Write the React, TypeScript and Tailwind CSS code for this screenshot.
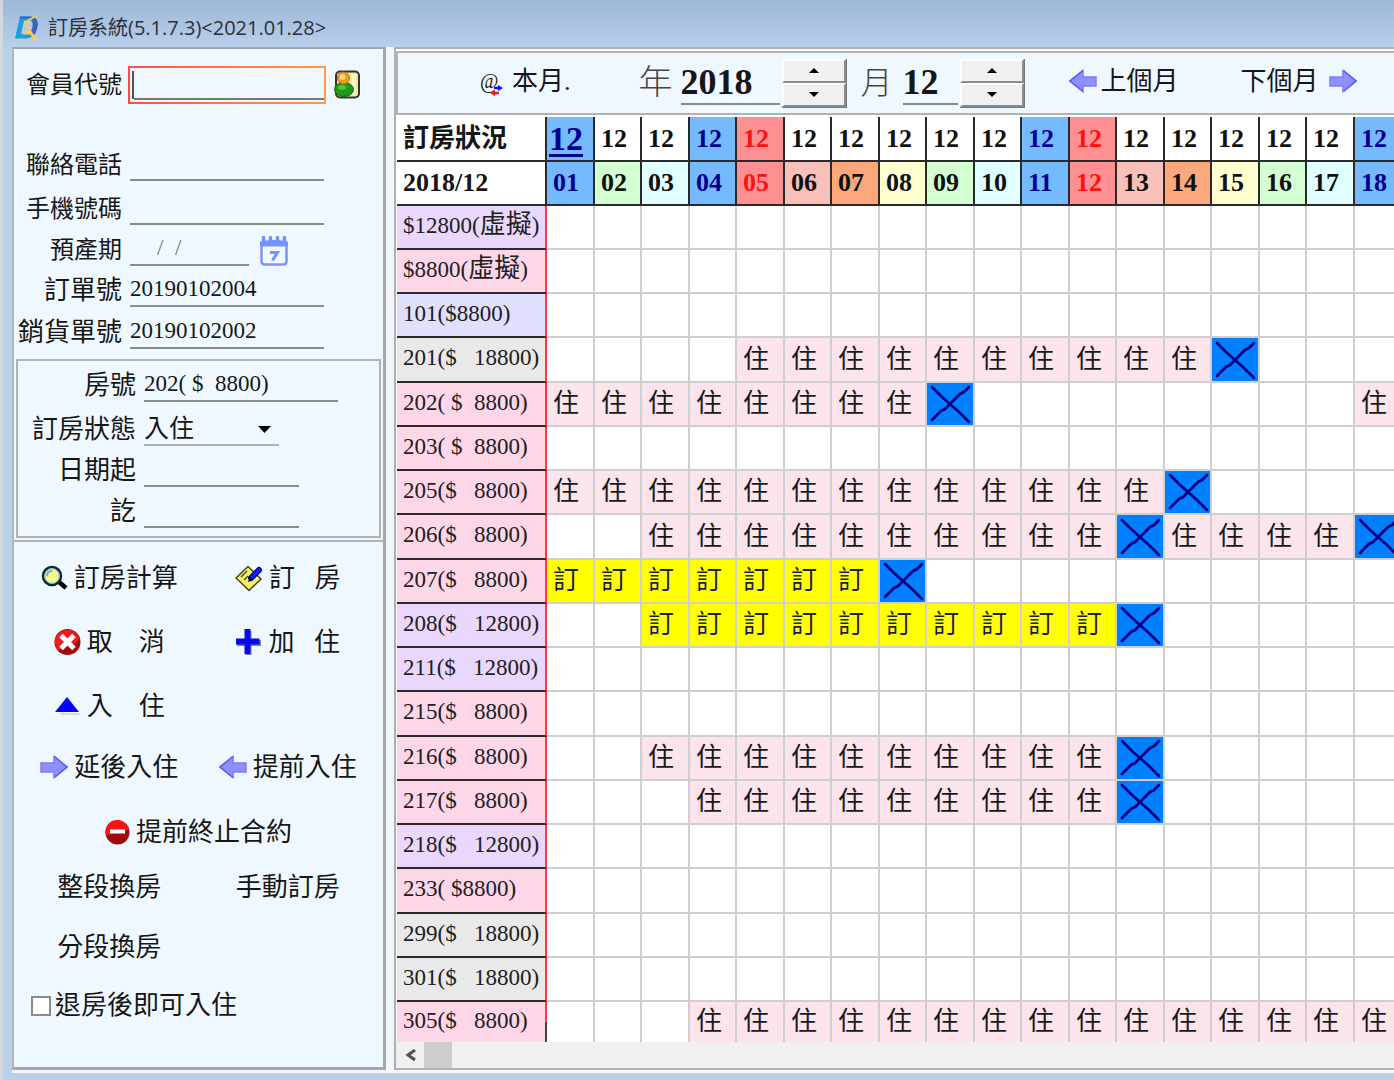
import type { ReactNode } from "react";

type Mark = "" | "stay" | "book" | "out";
type Room = { label: ReactNode; tone: string; marks: Mark[] };

const PINK = "bg-[#fdd6e8]";
const LILAC = "bg-[#e9d7fd]";
const INDIGO = "bg-[#dfe0ff]";
const GREY = "bg-[#e9e9e9]";

const DAYS = Array.from({ length: 18 }, (_, i) => i + 1);

const DAY_TONES = [
  "bg-[#75b9ff] text-[#000090]",
  "bg-[#d3ffd3] text-[#101010]",
  "bg-[#e0ffff] text-[#101010]",
  "bg-[#75b9ff] text-[#000090]",
  "bg-[#ff9092] text-[#ff1010]",
  "bg-[#f8c0b8] text-[#101010]",
  "bg-[#fda77c] text-[#101010]",
  "bg-[#ffffd0] text-[#101010]",
  "bg-[#d3ffd3] text-[#101010]",
  "bg-[#e0ffff] text-[#101010]",
];

function dayTone(day: number) {
  return day <= 3 ? DAY_TONES[day - 1] : DAY_TONES[3 + ((day - 4) % 7)];
}

function monthTone(day: number) {
  const t = dayTone(day);
  return t === DAY_TONES[0] || t === DAY_TONES[4] ? t : "bg-white text-[#101010]";
}

function marks(...runs: [number, number, Mark][]): Mark[] {
  return DAYS.map((d) => {
    const run = runs.find(([from, to]) => d >= from && d <= to);
    return run ? run[2] : "";
  });
}

function virtual(price: string) {
  return (
    <>
      ${price}(<span className="text-[26px]">虛擬</span>)
    </>
  );
}

const ROOMS: Room[] = [
  { label: virtual("12800"), tone: LILAC, marks: marks() },
  { label: virtual("8800"), tone: PINK, marks: marks() },
  { label: "101($8800)", tone: INDIGO, marks: marks() },
  { label: "201($   18800)", tone: GREY, marks: marks([5, 14, "stay"], [15, 15, "out"]) },
  { label: "202( $  8800)", tone: PINK, marks: marks([1, 8, "stay"], [9, 9, "out"], [18, 18, "stay"]) },
  { label: "203( $  8800)", tone: PINK, marks: marks() },
  { label: "205($   8800)", tone: PINK, marks: marks([1, 13, "stay"], [14, 14, "out"]) },
  {
    label: "206($   8800)",
    tone: PINK,
    marks: marks([3, 12, "stay"], [13, 13, "out"], [14, 17, "stay"], [18, 18, "out"]),
  },
  { label: "207($   8800)", tone: PINK, marks: marks([1, 7, "book"], [8, 8, "out"]) },
  { label: "208($   12800)", tone: LILAC, marks: marks([3, 12, "book"], [13, 13, "out"]) },
  { label: "211($   12800)", tone: LILAC, marks: marks() },
  { label: "215($   8800)", tone: PINK, marks: marks() },
  { label: "216($   8800)", tone: PINK, marks: marks([3, 12, "stay"], [13, 13, "out"]) },
  { label: "217($   8800)", tone: PINK, marks: marks([4, 12, "stay"], [13, 13, "out"]) },
  { label: "218($   12800)", tone: LILAC, marks: marks() },
  { label: "233( $8800)", tone: PINK, marks: marks() },
  { label: "299($   18800)", tone: GREY, marks: marks() },
  { label: "301($   18800)", tone: GREY, marks: marks() },
  { label: "305($   8800)", tone: PINK, marks: marks([4, 18, "stay"]) },
];

const MARK_TONES: Record<Mark, string> = {
  "": "bg-white",
  stay: "bg-[#fce4ec] text-[#181818]",
  book: "bg-[#ffff00] text-[#1c1c50]",
  out: "bg-[#0080ff]",
};

/* ---------- icons ---------- */

function LogoIcon() {
  return (
    <svg width="25" height="26" viewBox="0 0 25 26" aria-hidden="true">
      <path d="M5 1.500h10c6 0 8.500 4 7.500 10-1.500 8-5.500 12-12.500 12H0Z" fill="#1c9fd8" />
      <path d="M5 1.500h10c6 0 8.500 4 7.500 10-1 5-3 9-6 11l-1-8 2-11H4.500Z" fill="#3a66b4" />
      <path d="M9 5.500h5c3 0 4 2 3.500 6-1 5-3 7.500-7.500 7.500H6Z" fill="#b3c9e6" />
      <path d="M24.500.5c-5 0-15 4-15 9 0 3 3 4 5 5l-7 5 8 0c1 2 2 4 4 6l3-1c-3-3-5-7-7-10-2-3-4-4-3-6 1-3 6-5 12-8Z" fill="#f8cf4a" />
    </svg>
  );
}

function MemberIcon() {
  return (
    <svg width="27" height="29" viewBox="0 0 27 29" aria-hidden="true">
      <rect x="2" y="1.500" width="23" height="26" rx="4" fill="#e9eda0" stroke="#333" strokeWidth="2" />
      <path d="M20 4v21" stroke="#fffbc0" strokeWidth="4" />
      <ellipse cx="10" cy="19.500" rx="9.500" ry="7" fill="#219a1c" stroke="#0e6b12" />
      <ellipse cx="8" cy="17.500" rx="4" ry="2.500" fill="#4cc63c" />
      <circle cx="9.500" cy="8" r="6" fill="#f39a22" stroke="#c86d12" />
      <circle cx="8.500" cy="7" r="3" fill="#ffd778" />
    </svg>
  );
}

function CalendarIcon() {
  return (
    <svg width="30" height="31" viewBox="0 0 30 31" aria-hidden="true">
      <rect x="2.500" y="7" width="25" height="22.500" rx="3" fill="#f4f8ff" stroke="#7b93ff" strokeWidth="2.500" />
      <path d="M1 6.500q14-3 28 0v5H1Z" fill="#7093ff" />
      <path d="M4.500 2.500v5M11.500 2.500v5M18.500 2.500v5M25.500 2.500v5" stroke="#7093ff" strokeWidth="3.500" strokeLinecap="round" />
      <path d="M11 17.500h7.500l-5 8" fill="none" stroke="#7093ff" strokeWidth="3" />
    </svg>
  );
}

function SearchIcon() {
  return (
    <svg width="27" height="26" viewBox="0 0 27 26" aria-hidden="true">
      <path d="M18 17l7 6" stroke="#000" strokeWidth="4.500" />
      <circle cx="11" cy="11" r="9" fill="#f7f78c" stroke="#10233c" strokeWidth="2.500" />
      <circle cx="11" cy="11" r="7.200" fill="none" stroke="#7cc4e8" strokeWidth="1" />
      <path d="M6 11c0-3 2-5 5-5" fill="none" stroke="#5ab8f0" strokeWidth="2" />
    </svg>
  );
}

function NoteIcon() {
  return (
    <svg width="28" height="27" viewBox="0 0 28 27" aria-hidden="true">
      <path d="M1 13L13 1.500 26 14 14 25.500Z" fill="#f3f06a" stroke="#4a4410" strokeWidth="1.500" />
      <path d="M6 12l6-6M9 15l4-4" stroke="#55521c" strokeWidth="1.500" />
      <path d="M16 13l8-8" stroke="#000070" strokeWidth="6" strokeLinecap="round" />
      <path d="M17 12l7-7" stroke="#1020ff" strokeWidth="3.500" strokeLinecap="round" />
      <path d="M13 17l2-5 3 3Z" fill="#000" />
    </svg>
  );
}

function CancelIcon() {
  return (
    <svg width="27" height="28" viewBox="0 0 27 28" aria-hidden="true">
      <circle cx="13.500" cy="14" r="13" fill="#a30c0c" />
      <path d="M0.500 14a13 13 0 0 1 25-4c-5 8-14 9-22 12Z" fill="#ee1c1c" />
      <path d="M7 7.500l13 13M20 7.500l-13 13" stroke="#fff" strokeWidth="5" />
    </svg>
  );
}

function PlusIcon() {
  return (
    <svg width="27" height="28" viewBox="0 0 27 28" aria-hidden="true">
      <path d="M10.500 3h6v9H26v6h-9.500v9h-6v-9H2v-6h8.500Z" fill="#808080" />
      <path d="M9.500 1h6v9.500h9v6h-9V26h-6v-9.500H1v-6h8.500Z" fill="#0808f4" />
    </svg>
  );
}

function UpIcon() {
  return (
    <svg width="27" height="20" viewBox="0 0 27 20" aria-hidden="true">
      <path d="M6 17h20v2H8Z" fill="#dcdcdc" />
      <path d="M13 1L25 16H1Z" fill="#0404fa" />
    </svg>
  );
}

function ArrowRightIcon() {
  return (
    <svg width="28" height="24" viewBox="0 0 28 24" aria-hidden="true">
      <path d="M1 8h13V1.500L27 12 14 22.500V17H1Z" fill="#8f8fff" stroke="#7b7bfc" strokeWidth="1.500" />
      <path d="M14.500 1.500L27 12 14.500 22.500" fill="none" stroke="#5f5ff8" strokeWidth="1.500" />
    </svg>
  );
}

function ArrowLeftIcon() {
  return (
    <svg width="28" height="24" viewBox="0 0 28 24" aria-hidden="true">
      <path d="M27 8H14V1.500L1 12l13 10.500V17h13Z" fill="#8f8fff" stroke="#7b7bfc" strokeWidth="1.500" />
      <path d="M14 1.500L1 12l13 10.500" fill="none" stroke="#5f5ff8" strokeWidth="1.500" />
    </svg>
  );
}

function StopIcon() {
  return (
    <svg width="25" height="25" viewBox="0 0 25 25" aria-hidden="true">
      <circle cx="12.500" cy="12.500" r="12" fill="#a00a0a" />
      <path d="M0.700 15A12 12 0 1 1 24 9c-6 6-14 3-23 6Z" fill="#f81414" />
      <path d="M5 11.500h15" stroke="#fff" strokeWidth="4" />
    </svg>
  );
}

function SwapArrows() {
  return (
    <svg className="absolute left-2.5 top-4" width="13" height="11" viewBox="0 0 13 11" aria-hidden="true">
      <path d="M4 3h5" stroke="#1010ff" strokeWidth="2.500" />
      <path d="M8 0l5 3-5 3Z" fill="#1010ff" />
      <path d="M4 8h5" stroke="#ff1010" strokeWidth="2.500" />
      <path d="M5 5L0 8l5 3Z" fill="#ff1010" />
    </svg>
  );
}

function CrossMark() {
  return (
    <svg className="block" width="46" height="42" viewBox="0 0 46 42" role="img" aria-label="退房">
      <path
        d="M5 4l9 9 10 9 8 7 10 10M42 4l-5 5-4 2-9 9-6 6-4 2-9 9"
        fill="none"
        stroke="#000080"
        strokeWidth="2.800"
        strokeLinecap="round"
      />
    </svg>
  );
}

/* ---------- controls ---------- */

function Field({
  id,
  label,
  labelClass,
  rowClass = "h-[41px]",
  widthClass = "w-[194px]",
  value = "",
  children,
}: {
  id: string;
  label: string;
  labelClass: string;
  rowClass?: string;
  widthClass?: string;
  value?: string;
  children?: ReactNode;
}) {
  return (
    <div className={`flex items-end gap-2 ${rowClass}`}>
      <label htmlFor={id} className={`shrink-0 whitespace-nowrap text-right leading-8 ${labelClass}`}>
        {label}
      </label>
      <input
        id={id}
        defaultValue={value}
        className={`h-8 border-b-2 border-[#8a8a8a] bg-transparent pb-0.5 text-[23px] outline-none ${widthClass}`}
      />
      {children}
    </div>
  );
}

function Action({ icon, label, className = "" }: { icon?: ReactNode; label: string; className?: string }) {
  return (
    <button type="button" className={`flex items-center justify-center gap-1.5 whitespace-pre text-[26px] ${className}`}>
      {icon}
      <span>{label}</span>
    </button>
  );
}

function Spinner({ name }: { name: string }) {
  const cls =
    "flex h-6 w-full items-center justify-center border-2 border-b-[#8c8c8c] border-l-white border-r-[#8c8c8c] border-t-white bg-[#f0f0f0]";
  return (
    <div className="w-[65px] border-b border-r border-[#777]">
      <button type="button" aria-label={`${name}+`} className={cls}>
        <svg width="10" height="5" viewBox="0 0 10 5" aria-hidden="true">
          <path d="M5 0l5 5H0Z" fill="#000" />
        </svg>
      </button>
      <button type="button" aria-label={`${name}-`} className={cls}>
        <svg width="10" height="5" viewBox="0 0 10 5" aria-hidden="true">
          <path d="M0 0h10L5 5Z" fill="#000" />
        </svg>
      </button>
    </div>
  );
}

/* ---------- panels ---------- */

function SidePanel() {
  const outer = "w-[108px]";
  const inner = "w-[118px] text-[26px]";
  return (
    <aside className="flex w-[374px] shrink-0 flex-col border-b-[3px] border-l-2 border-r-[3px] border-t-2 border-[#a6a6a6] border-l-[#b4b4b4] bg-[#f0f8ff]">
      <div className="mt-[17px] flex h-[38px] items-center">
        <label htmlFor="member" className="w-[108px] shrink-0 text-right text-[24px]">
          會員代號
        </label>
        <div className="ml-1.5 h-[38px] w-[198px] bg-linear-to-r from-[#ff4a48] to-[#ff9a48] p-0.5">
          <div className="flex h-full items-center bg-[#f0f8ff] pl-0.5">
            <span className="h-7 w-0.5 bg-[#555]" />
            <input id="member" className="h-[30px] w-full border-b-2 border-[#777] bg-transparent text-[23px] outline-none" />
          </div>
        </div>
        <button type="button" aria-label="會員" className="ml-2 pb-0.5">
          <MemberIcon />
        </button>
      </div>

      <Field id="phone" label="聯絡電話" labelClass={`${outer} text-[24px]`} rowClass="h-[77px]" />
      <Field id="mobile" label="手機號碼" labelClass={`${outer} text-[24px]`} rowClass="h-11" />
      <Field
        id="due"
        label="預產期"
        labelClass={`${outer} text-[24px]`}
        widthClass="w-[119px] whitespace-pre pl-1 text-[#777]"
        value="    /  /"
      >
        <button type="button" aria-label="日曆" className="ml-0.5">
          <CalendarIcon />
        </button>
      </Field>
      <Field id="order" label="訂單號" labelClass={`${outer} text-[26px]`} value="20190102004" />
      <Field id="sales" label="銷貨單號" labelClass={`${outer} text-[26px]`} value="20190102002" rowClass="h-[42px]" />

      <div className="mx-0.5 mt-2.5 border-2 border-[#b2b2b2] pb-2">
        <Field id="room" label="房號" labelClass={inner} value="202( $  8800)" rowClass="h-[41px]" />
        <div className="flex h-11 items-end gap-2">
          <label htmlFor="status" className={`shrink-0 text-right leading-8 ${inner}`}>
            訂房狀態
          </label>
          <div className="relative w-[135px]">
            <select
              id="status"
              className="block h-8 w-full appearance-none border-b-2 border-[#b0b0b0] bg-transparent text-[25px] leading-7 outline-none"
            >
              <option>入住</option>
            </select>
            <svg className="pointer-events-none absolute right-2 top-3" width="13" height="7" viewBox="0 0 13 7" aria-hidden="true">
              <path d="M0 0h13L6.500 7Z" fill="#000" />
            </svg>
          </div>
        </div>
        <Field id="from" label="日期起" labelClass={inner} widthClass="w-[155px]" />
        <Field id="to" label="訖" labelClass={inner} widthClass="w-[155px]" />
      </div>
      <div className="mt-0.5 h-0.5 bg-[#b2b2b2]" />

      <div className="mx-1.5 mt-1 grid grid-cols-2 grid-rows-[64px_64px_64px_58px_72px_38px_82px]">
        <Action icon={<SearchIcon />} label="訂房計算" />
        <Action icon={<NoteIcon />} label="訂   房" />
        <Action icon={<CancelIcon />} label="取　消" />
        <Action icon={<PlusIcon />} label="加   住" />
        <Action icon={<UpIcon />} label="入　住" />
        <span />
        <Action icon={<ArrowRightIcon />} label="延後入住" />
        <Action icon={<ArrowLeftIcon />} label="提前入住" />
        <Action icon={<StopIcon />} label="提前終止合約" className="col-span-2" />
        <Action label="整段換房" />
        <Action label="手動訂房" />
        <Action label="分段換房" />
      </div>
      <label className="ml-[17px] flex items-center gap-1 text-[26px] leading-9">
        <input type="checkbox" className="size-5 appearance-none border-2 border-[#8a8a8a] bg-white" />
        退房後即可入住
      </label>
    </aside>
  );
}

function Toolbar() {
  return (
    <div className="flex h-16 shrink-0 items-center whitespace-nowrap border-2 border-r-0 border-[#b2b2b2] bg-[#f0f8ff] pl-[82px] text-[26px]">
      <button type="button" className="flex items-center pb-1">
        <span className="relative mr-2.5 w-[22px] text-left text-[20px] leading-6">
          @
          <SwapArrows />
        </span>
        本月.
      </button>
      <label htmlFor="year" className="ml-[68px] text-[34px] font-light leading-10 text-[#444]">
        年
      </label>
      <input
        id="year"
        defaultValue="2018"
        className="ml-2 h-11 w-[99px] border-b-2 border-[#8a8a8a] bg-transparent text-[36px] font-bold outline-none"
      />
      <div className="ml-0.5">
        <Spinner name="年" />
      </div>
      <label htmlFor="month" className="ml-3.5 text-[32px] font-light leading-10 text-[#444]">
        月
      </label>
      <input
        id="month"
        defaultValue="12"
        className="ml-2.5 h-11 w-[55px] border-b-2 border-[#8a8a8a] bg-transparent text-[36px] font-bold outline-none"
      />
      <div className="ml-0.5">
        <Spinner name="月" />
      </div>
      <button type="button" className="ml-11 flex items-center gap-1 pb-1">
        <ArrowLeftIcon />
        上個月
      </button>
      <button type="button" className="ml-[62px] flex items-center gap-2.5 pb-1">
        下個月
        <ArrowRightIcon />
      </button>
    </div>
  );
}

function BookingTable() {
  const head = "border-b-2 border-r-2 border-[#2a2a2a] p-0 text-left text-[26px] font-bold leading-none";
  return (
    <table className="w-[1005px] table-fixed border-separate border-spacing-0">
      <colgroup>
        <col className="w-[150px]" />
        {DAYS.map((d) => (
          <col key={d} className="even:w-[48px] odd:w-[47px]" />
        ))}
      </colgroup>
      <thead>
        <tr className="h-[45px]">
          <th scope="col" className={`${head} bg-white pl-1.5`}>
            訂房狀況
          </th>
          {DAYS.map((d) => (
            <th key={d} scope="col" className={`${head} ${monthTone(d)} ${d === 1 ? "pl-0.5" : "pl-1.5"}`}>
              {d === 1 ? (
                <span className="inline-block h-9 border-b-[3px] border-[#000090] text-[34px] leading-9">12</span>
              ) : (
                "12"
              )}
            </th>
          ))}
        </tr>
        <tr className="h-11">
          <th scope="col" className={`${head} bg-white pl-1.5`}>
            2018/12
          </th>
          {DAYS.map((d) => (
            <th key={d} scope="col" className={`${head} ${dayTone(d)} pl-1.5`}>
              {String(d).padStart(2, "0")}
            </th>
          ))}
        </tr>
      </thead>
      <tbody>
        {ROOMS.map((room, r) => {
          const last = r === ROOMS.length - 1;
          return (
            <tr key={r} className={last ? "h-10" : "h-11 nth-[4n]:h-[45px]"}>
              <th
                scope="row"
                className={`relative whitespace-pre border-r-2 border-r-[#f83c3c] p-0 pb-1 pl-1.5 text-left text-[23px] font-normal leading-none text-[#202020] ${
                  last ? "" : "border-b-2 border-b-[#2a2a2a]"
                } ${room.tone}`}
              >
                {room.label}
                {last && <span className="absolute -right-0.5 bottom-0 h-5 w-0.5 bg-[#444]" />}
              </th>
              {room.marks.map((m, i) => (
                <td
                  key={i}
                  className={`border-r-2 border-r-[#cfcfcf] p-0 text-[26px] leading-none ${
                    last ? "" : "border-b-2 border-b-[#cfcfcf] "
                  }${m === "out" ? "" : "pl-1.5"} ${MARK_TONES[m]}`}
                >
                  {m === "stay" && "住"}
                  {m === "book" && "訂"}
                  {m === "out" && <CrossMark />}
                </td>
              ))}
            </tr>
          );
        })}
      </tbody>
    </table>
  );
}

export default function App() {
  return (
    <div className="flex min-h-screen flex-col overflow-hidden border-l-[3px] border-[#d3d8de] bg-[#b9d0ea] font-['Liberation_Serif','Noto_Sans_CJK_TC',serif] text-[#161616]">
      <header className="flex h-[47px] shrink-0 items-center bg-linear-to-b from-[#9db7d7] to-[#b9cfea] pl-3 pt-2">
        <LogoIcon />
        <h1 className="ml-2 font-['Open_Sans','Noto_Sans_CJK_TC',sans-serif] text-[20px] font-normal text-[#2c3038]">
          訂房系統(5.1.7.3)&lt;2021.01.28&gt;
        </h1>
      </header>
      <main className="mb-2 ml-[9px] flex flex-1 items-stretch border-b-[3px] border-[#f4f8fc] bg-[#f0f6fc]">
        <SidePanel />
        <section className="ml-2 flex min-w-0 flex-1 flex-col overflow-hidden border-b-2 border-l-2 border-t-2 border-[#b0b0b0] bg-white pt-0.5">
          <Toolbar />
          <div className="overflow-hidden pl-px pt-0.5">
            <BookingTable />
          </div>
          <div className="flex h-[26px] shrink-0 items-stretch bg-[#f0f0f0]">
            <button type="button" aria-label="向左捲動" className="flex w-7 items-center justify-center">
              <svg width="11" height="12" viewBox="0 0 11 12" aria-hidden="true">
                <path d="M10 1L3 6l7 5" fill="none" stroke="#505050" strokeWidth="3" />
              </svg>
            </button>
            <div className="w-7 bg-[#cdcdcd]" />
          </div>
        </section>
      </main>
    </div>
  );
}
